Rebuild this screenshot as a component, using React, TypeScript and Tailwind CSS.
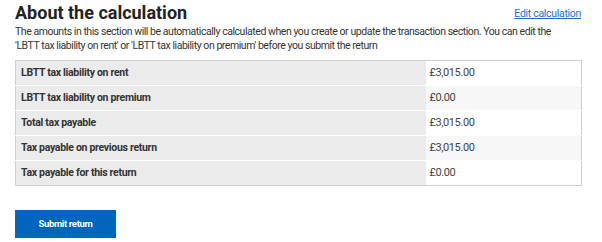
const rows = [
  { label: 'LBTT tax liability on rent', value: '£3,015.00' },
  { label: 'LBTT tax liability on premium', value: '£0.00' },
  { label: 'Total tax payable', value: '£3,015.00' },
  { label: 'Tax payable on previous return', value: '£3,015.00' },
  { label: 'Tax payable for this return', value: '£0.00' }
];

const App = () => {
  return (
    <div className="w-[602px] h-[242px] bg-white text-[#333] font-['Roboto',sans-serif] px-[15px] pt-[2px]">
      <div className="flex items-end justify-between">
        <h2 className="text-[18px] font-bold leading-[22px] text-[#222]">About the calculation</h2>
        <a
          href="#"
          className="text-[10.5px] tracking-[-0.3px] leading-[14px] mb-[3px] text-[#1a6fc9] underline mr-[6px]"
        >
          Edit calculation
        </a>
      </div>
      <p className="text-[10.5px] tracking-[-0.45px] leading-[14px] mt-[1px] w-[562px]">
        The amounts in this section will be automatically calculated when you create or update the transaction
        section. You can edit the 'LBTT tax liability on rent' or 'LBTT tax liability on premium' before you submit
        the return
      </p>
      <table className="mt-[7px] w-[567px] border-collapse border border-[#cfcfcf]">
        <tbody>
          {rows.map((row, i) => (
            <tr key={row.label} className="h-[25px] border-b border-white last:border-b-0">
              <td className="bg-[#ebebeb] font-bold pl-[5px] text-[#333] w-[410px] text-[10.5px] tracking-[-0.3px]">
                {row.label}
              </td>
              <td
                className={`${i % 2 === 1 ? 'bg-[#f7f7f7]' : 'bg-white'} pl-[4px] text-[#444] text-[11px] tracking-[-0.4px]`}
              >
                {row.value}
              </td>
            </tr>
          ))}
        </tbody>
      </table>
      <button className="mt-[24px] w-[101px] h-[28px] bg-[#0065bd] text-white text-[9.5px] tracking-[-0.35px] font-bold">
        Submit return
      </button>
    </div>
  );
};

export default App;
